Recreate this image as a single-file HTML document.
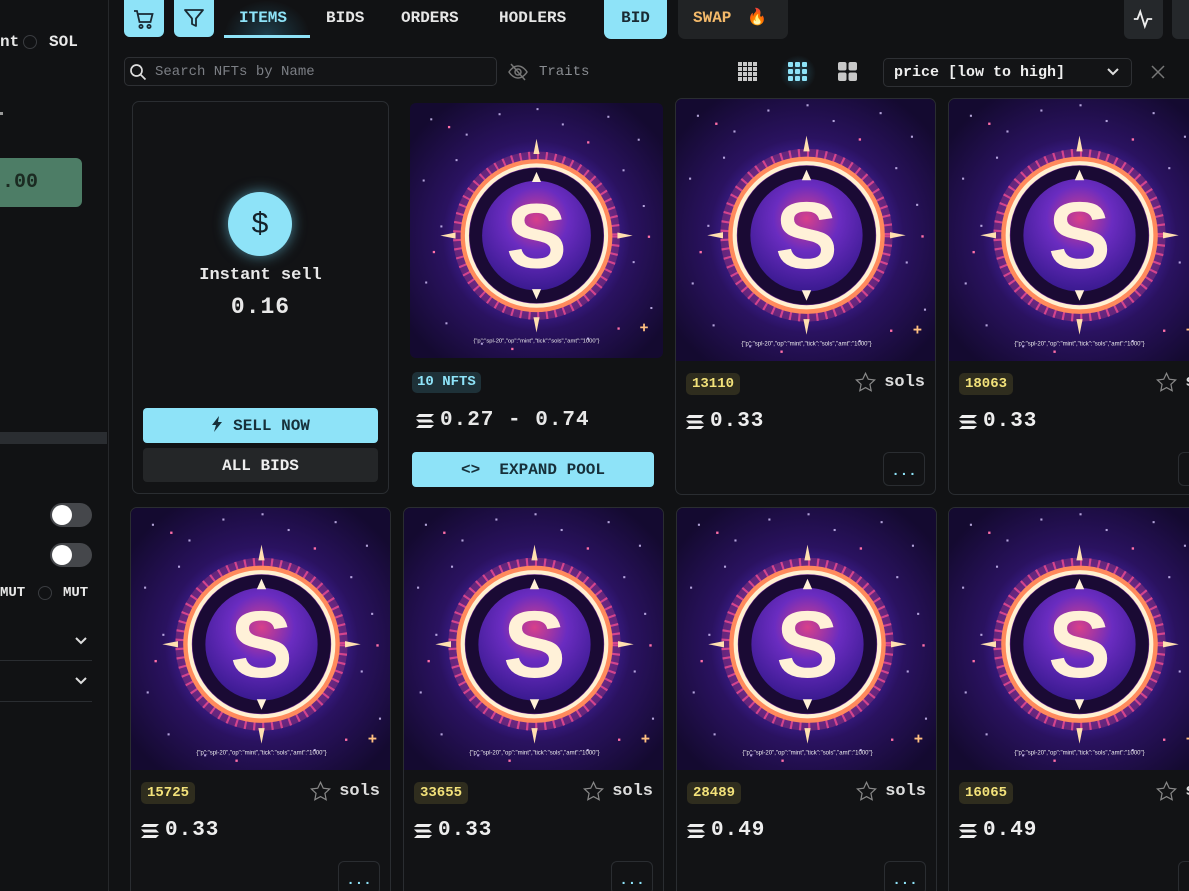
<!DOCTYPE html>
<html><head><meta charset="utf-8"><style>
*{box-sizing:border-box;margin:0;padding:0}
html,body{width:1189px;height:891px;overflow:hidden}
body{background:#111214;font-family:"Liberation Mono","DejaVu Sans Mono",monospace;color:#e8e8e8;position:relative}
.a{position:absolute}
.b{font-weight:bold}
.card{position:absolute;width:261px;height:397px;border:1px solid #2a2d31;border-radius:7px;background:#121315;overflow:hidden}
.card .art{position:absolute;left:0;top:0;width:261px;height:262px}
.badge{position:absolute;left:10px;top:274px;height:22px;line-height:22px;padding:0 6px;border-radius:5px;background:#2f2d1e;color:#f3e27a;font-weight:bold;font-size:14px}
.fav{position:absolute;right:10px;top:273px;font-size:17px;font-weight:bold;color:#ddd;display:flex;align-items:center;gap:8px}
.price{position:absolute;left:10px;top:311px;font-size:21px;font-weight:bold;color:#eee;display:flex;align-items:center;gap:6px;letter-spacing:1px}
.more{position:absolute;right:10px;top:353px;width:42px;height:34px;border:1px solid #2a2d31;border-radius:6px;color:#8ee3f8;text-align:center;line-height:38px;font-weight:bold;font-size:14px}
.nav{position:absolute;top:9px;font-size:16px;font-weight:bold;color:#e6e6e6}
</style></head><body>
<svg width="0" height="0" style="position:absolute"><defs>
<radialGradient id="bg" cx="50%" cy="52%" r="62%"><stop offset="0" stop-color="#5a2cc0"/><stop offset=".42" stop-color="#4422a0"/><stop offset=".6" stop-color="#2a1260"/><stop offset="1" stop-color="#140a30"/></radialGradient>
<radialGradient id="inn" cx="50%" cy="35%" r="65%"><stop offset="0" stop-color="#d8408a"/><stop offset=".45" stop-color="#6a2cc0"/><stop offset="1" stop-color="#3a1a90"/></radialGradient>
<g id="artg">
<rect width="100" height="100" fill="url(#bg)"/>
<g fill="#d8c8ff" opacity=".8"><rect x="8" y="6" width=".8" height=".8"/><rect x="22" y="12" width=".8" height=".8"/><rect x="35" y="4" width=".8" height=".8"/><rect x="60" y="8" width=".8" height=".8"/><rect x="78" y="5" width=".8" height=".8"/><rect x="90" y="14" width=".8" height=".8"/><rect x="5" y="30" width=".8" height=".8"/><rect x="12" y="48" width=".8" height=".8"/><rect x="6" y="70" width=".8" height=".8"/><rect x="14" y="86" width=".8" height=".8"/><rect x="92" y="40" width=".8" height=".8"/><rect x="88" y="62" width=".8" height=".8"/><rect x="95" y="80" width=".8" height=".8"/><rect x="70" y="92" width=".8" height=".8"/><rect x="28" y="94" width=".8" height=".8"/><rect x="50" y="2" width=".8" height=".8"/><rect x="18" y="22" width=".8" height=".8"/><rect x="84" y="26" width=".8" height=".8"/></g>
<g fill="#ff6fa8"><rect x="15" y="9" width=".9" height=".9"/><rect x="70" y="15" width=".9" height=".9"/><rect x="9" y="58" width=".9" height=".9"/><rect x="94" y="52" width=".9" height=".9"/><rect x="40" y="96" width=".9" height=".9"/><rect x="82" y="88" width=".9" height=".9"/></g>
<circle cx="50" cy="52" r="33" fill="#c0407a" opacity=".35"/>
<circle cx="50" cy="52" r="31" fill="none" stroke="#e0488f" stroke-width="4" stroke-dasharray="0.8 2.6" opacity=".9"/>
<circle cx="50" cy="52" r="29" fill="none" stroke="#ff8a5c" stroke-width="2"/>
<circle cx="50" cy="52" r="27.5" fill="none" stroke="#fff0d0" stroke-width="1.6"/>
<path d="M50 14l1.2 6h-2.4zM50 90l1.2-6h-2.4zM12 52l6-1.2v2.4zM88 52l-6-1.2v2.4z" fill="#ffe0b0"/>
<circle cx="50" cy="52" r="26.5" fill="#1a0a34"/>
<circle cx="50" cy="52" r="21.5" fill="url(#inn)"/>
<text x="50" y="64.5" text-anchor="middle" font-family="Liberation Sans,sans-serif" font-weight="bold" font-size="36" fill="#fff1d8">S</text>
<path d="M50 27l1.8 4h-3.6zM50 77l1.8-4h-3.6z" fill="#fff1d8"/>
<text x="50" y="94" text-anchor="middle" font-family="Liberation Sans,sans-serif" font-size="2.3" fill="#eee">{"p":"spl-20","op":"mint","tick":"sols","amt":"1000"}</text>
<path d="M91 88h3M92.5 86.5v3" stroke="#ffc080" stroke-width=".7"/>
</g></defs></svg>

<!-- sidebar -->
<div class="a" style="left:108px;top:0;width:1px;height:891px;background:#26282b"></div>
<div class="a b" style="left:0;top:33px;font-size:16px">nt</div>
<div class="a" style="left:23px;top:35px;width:14px;height:14px;border:1.5px solid #3a3c40;border-radius:50%"></div>
<div class="a b" style="left:49px;top:33px;font-size:16px">SOL</div>
<div class="a" style="left:0;top:112px;width:3px;height:3px;background:#999"></div>
<div class="a" style="left:0;top:158px;width:82px;height:49px;background:#4d7d66;border-radius:0 6px 6px 0;color:#1b2b22;font-size:20px;font-weight:bold;line-height:49px;padding-left:2px">.00</div>
<div class="a" style="left:0;top:432px;width:107px;height:12px;background:#2a2d31"></div>
<div class="a" style="left:50px;top:503px;width:42px;height:24px;border-radius:12px;background:#45474b"><div class="a" style="left:2px;top:2px;width:20px;height:20px;border-radius:50%;background:#fff"></div></div>
<div class="a" style="left:50px;top:543px;width:42px;height:24px;border-radius:12px;background:#45474b"><div class="a" style="left:2px;top:2px;width:20px;height:20px;border-radius:50%;background:#fff"></div></div>
<div class="a b" style="left:0;top:585px;font-size:14px">MUT</div>
<div class="a" style="left:38px;top:586px;width:14px;height:14px;border:1.5px solid #3a3c40;border-radius:50%"></div>
<div class="a b" style="left:63px;top:585px;font-size:14px">MUT</div>
<svg class="a" style="left:74px;top:633px" width="14" height="14" viewBox="0 0 14 14"><path d="M2 5l5 5 5-5" stroke="#ddd" stroke-width="2" fill="none"/></svg>
<div class="a" style="left:0;top:660px;width:92px;height:1px;background:#2a2d31"></div>
<svg class="a" style="left:74px;top:673px" width="14" height="14" viewBox="0 0 14 14"><path d="M2 5l5 5 5-5" stroke="#ddd" stroke-width="2" fill="none"/></svg>
<div class="a" style="left:0;top:701px;width:92px;height:1px;background:#2a2d31"></div>

<!-- top nav -->
<div class="a" style="left:124px;top:0;width:40px;height:37px;background:#8ee3f8;border-radius:0 0 6px 6px"></div>
<svg class="a" style="left:132px;top:7px" width="24" height="24" viewBox="0 0 24 24" fill="none" stroke="#1a2a33" stroke-width="1.8"><path d="M2 4h3l2.5 11h11l2-8H6.5"/><circle cx="9" cy="19.5" r="1.6"/><circle cx="17" cy="19.5" r="1.6"/></svg>
<div class="a" style="left:174px;top:0;width:40px;height:37px;background:#8ee3f8;border-radius:0 0 6px 6px"></div>
<svg class="a" style="left:182px;top:6px" width="24" height="24" viewBox="0 0 24 24" fill="none" stroke="#1a2a33" stroke-width="1.8" stroke-linejoin="round"><path d="M3 4h18l-7 8.5V20l-4-2v-5.5z"/></svg>
<div class="a" style="left:224px;top:0;width:86px;height:35px;background:radial-gradient(ellipse at 50% 100%,rgba(60,160,200,.3),transparent 70%)"></div>
<div class="nav" style="left:239px;color:#8ee3f8">ITEMS</div>
<div class="a" style="left:224px;top:35px;width:86px;height:3px;background:#8ee3f8"></div>
<div class="nav" style="left:326px">BIDS</div>
<div class="nav" style="left:401px">ORDERS</div>
<div class="nav" style="left:499px">HODLERS</div>
<div class="a b" style="left:604px;top:0;width:63px;height:39px;background:#8ee3f8;border-radius:0 0 7px 7px;color:#1a2a33;font-size:16px;text-align:center;line-height:37px">BID</div>
<div class="a b" style="left:678px;top:0;width:110px;height:39px;background:#212325;border-radius:0 0 7px 7px;color:#f3b96a;font-size:16px;line-height:37px;padding-left:15px">SWAP <span style="color:#f07030;margin-left:6px">🔥</span></div>
<div class="a" style="left:1124px;top:0;width:39px;height:39px;background:#25282b;border-radius:0 0 6px 6px"></div>
<svg class="a" style="left:1132px;top:8px" width="22" height="22" viewBox="0 0 24 24" fill="none" stroke="#eee" stroke-width="2"><path d="M2 12h4l3-8 5 16 3-8h5"/></svg>
<div class="a" style="left:1172px;top:0;width:20px;height:39px;background:#25282b;border-radius:0 0 0 6px"></div>

<!-- search row -->
<div class="a" style="left:124px;top:57px;width:373px;height:29px;border:1px solid #2e3034;border-radius:5px;background:#131416"></div>
<svg class="a" style="left:129px;top:63px" width="18" height="18" viewBox="0 0 18 18" fill="none" stroke="#ddd" stroke-width="1.7"><circle cx="7.5" cy="7.5" r="5.5"/><path d="M11.5 11.5l5 5"/></svg>
<div class="a" style="left:155px;top:64px;font-size:14px;color:#7c7f85">Search NFTs by Name</div>
<svg class="a" style="left:508px;top:63px" width="20" height="18" viewBox="0 0 20 18" fill="none" stroke="#777" stroke-width="1.5"><path d="M1 9s3.5-6 9-6 9 6 9 6-3.5 6-9 6-9-6-9-6z"/><circle cx="10" cy="9" r="3"/><path d="M3 1l14 16"/></svg>
<div class="a" style="left:539px;top:64px;font-size:14px;color:#8a8d92">Traits</div>
<svg class="a" style="left:738px;top:62px" width="19" height="19" viewBox="0 0 19 19" fill="#c8c8c8"><rect x="0" y="0" width="4" height="4"/><rect x="5" y="0" width="4" height="4"/><rect x="10" y="0" width="4" height="4"/><rect x="15" y="0" width="4" height="4"/><rect x="0" y="5" width="4" height="4"/><rect x="5" y="5" width="4" height="4"/><rect x="10" y="5" width="4" height="4"/><rect x="15" y="5" width="4" height="4"/><rect x="0" y="10" width="4" height="4"/><rect x="5" y="10" width="4" height="4"/><rect x="10" y="10" width="4" height="4"/><rect x="15" y="10" width="4" height="4"/><rect x="0" y="15" width="4" height="4"/><rect x="5" y="15" width="4" height="4"/><rect x="10" y="15" width="4" height="4"/><rect x="15" y="15" width="4" height="4"/></svg>
<div class="a" style="left:780px;top:55px;width:36px;height:36px;background:radial-gradient(circle,rgba(80,190,230,.3),transparent 70%)"></div>
<svg class="a" style="left:788px;top:62px" width="19" height="19" viewBox="0 0 19 19" fill="#8ee3f8"><rect x="0" y="0" width="5" height="5" rx="1"/><rect x="7" y="0" width="5" height="5" rx="1"/><rect x="14" y="0" width="5" height="5" rx="1"/><rect x="0" y="7" width="5" height="5" rx="1"/><rect x="7" y="7" width="5" height="5" rx="1"/><rect x="14" y="7" width="5" height="5" rx="1"/><rect x="0" y="14" width="5" height="5" rx="1"/><rect x="7" y="14" width="5" height="5" rx="1"/><rect x="14" y="14" width="5" height="5" rx="1"/></svg>
<svg class="a" style="left:838px;top:62px" width="19" height="19" viewBox="0 0 19 19" fill="#c8c8c8"><rect x="0" y="0" width="8.5" height="8.5" rx="2"/><rect x="10.5" y="0" width="8.5" height="8.5" rx="2"/><rect x="0" y="10.5" width="8.5" height="8.5" rx="2"/><rect x="10.5" y="10.5" width="8.5" height="8.5" rx="2"/></svg>
<div class="a" style="left:883px;top:58px;width:249px;height:29px;border:1px solid #2e3034;border-radius:5px;background:#131416"></div>
<div class="a b" style="left:894px;top:64px;font-size:15px;color:#eee">price [low to high]</div>
<svg class="a" style="left:1106px;top:66px" width="14" height="12" viewBox="0 0 14 12"><path d="M2 3l5 5 5-5" stroke="#ddd" stroke-width="2" fill="none"/></svg>
<svg class="a" style="left:1151px;top:65px" width="14" height="14" viewBox="0 0 14 14"><path d="M1 1l12 12M13 1L1 13" stroke="#777" stroke-width="1.5"/></svg>

<!-- instant sell card -->
<div class="a" style="left:132px;top:101px;width:257px;height:393px;border:1px solid #2a2d31;border-radius:7px;background:#121315"></div>
<div class="a" style="left:228px;top:192px;width:64px;height:64px;border-radius:50%;background:#8ee3f8;box-shadow:0 0 14px rgba(110,210,240,.6);color:#14222a;font-size:30px;text-align:center;line-height:64px;font-family:'Liberation Sans',sans-serif">$</div>
<div class="a b" style="left:132px;top:266px;width:257px;text-align:center;font-size:17px">Instant sell</div>
<div class="a b" style="left:132px;top:294px;width:257px;text-align:center;font-size:23px;letter-spacing:1px">0.16</div>
<div class="a b" style="left:143px;top:408px;width:235px;height:35px;background:#8ee3f8;border-radius:4px;color:#17303a;font-size:16px;text-align:center;line-height:36px"><svg width="12" height="16" viewBox="0 0 12 16" style="vertical-align:-2px;margin-right:10px"><path d="M8 0L1 9h4l-2 7 8-10H7z" fill="#17303a"/></svg>SELL NOW</div>
<div class="a b" style="left:143px;top:448px;width:235px;height:34px;background:#242628;border-radius:4px;color:#eee;font-size:16px;text-align:center;line-height:36px">ALL BIDS</div>

<!-- pool card -->
<div class="a" style="left:410px;top:103px;width:253px;height:255px;overflow:hidden;border-radius:6px"><svg width="253" height="255" viewBox="0 0 100 100" preserveAspectRatio="none"><use href="#artg"/></svg></div>
<div class="a b" style="left:412px;top:372px;height:21px;line-height:21px;padding:0 5px;border-radius:5px;background:#1e3138;color:#8ee3f8;font-size:14px">10 NFTS</div>
<div class="a b" style="left:416px;top:409px;font-size:21px;display:flex;align-items:center;gap:6px;letter-spacing:1px"><svg width="18" height="14" viewBox="0 0 18 14" fill="#eee"><path d="M3 0h15l-3 3H0zM0 5.5h15l3 3H3zM3 11h15l-3 3H0z"/></svg>0.27 - 0.74</div>
<div class="a b" style="left:412px;top:452px;width:242px;height:35px;background:#8ee3f8;border-radius:4px;color:#17303a;font-size:16px;text-align:center;line-height:36px">&lt;&gt;&nbsp; EXPAND POOL</div>

<!-- NFT cards -->
<div class="card" style="left:675px;top:98px"><svg class="art" viewBox="0 0 100 100" preserveAspectRatio="none"><use href="#artg"/></svg><div class="badge">13110</div><div class="fav"><svg width="21" height="20" viewBox="0 0 24 23"><path d="M12 1.5l3.2 6.8 7.3.9-5.4 5 1.4 7.3L12 17.9l-6.5 3.6 1.4-7.3-5.4-5 7.3-.9z" fill="none" stroke="#888" stroke-width="1.4"/></svg>sols</div><div class="price"><svg width="18" height="14" viewBox="0 0 18 14" fill="#eee"><path d="M3 0h15l-3 3H0zM0 5.5h15l3 3H3zM3 11h15l-3 3H0z"/></svg>0.33</div><div class="more">...</div></div>
<div class="card" style="left:948px;top:98px"><svg class="art" viewBox="0 0 100 100" preserveAspectRatio="none"><use href="#artg"/></svg><div class="badge">18063</div><div class="fav" style="right:-18px"><svg width="21" height="20" viewBox="0 0 24 23"><path d="M12 1.5l3.2 6.8 7.3.9-5.4 5 1.4 7.3L12 17.9l-6.5 3.6 1.4-7.3-5.4-5 7.3-.9z" fill="none" stroke="#888" stroke-width="1.4"/></svg>sols</div><div class="price"><svg width="18" height="14" viewBox="0 0 18 14" fill="#eee"><path d="M3 0h15l-3 3H0zM0 5.5h15l3 3H3zM3 11h15l-3 3H0z"/></svg>0.33</div><div class="more" style="right:-12px">...</div></div>

<div class="card" style="left:130px;top:507px"><svg class="art" viewBox="0 0 100 100" preserveAspectRatio="none"><use href="#artg"/></svg><div class="badge">15725</div><div class="fav"><svg width="21" height="20" viewBox="0 0 24 23"><path d="M12 1.5l3.2 6.8 7.3.9-5.4 5 1.4 7.3L12 17.9l-6.5 3.6 1.4-7.3-5.4-5 7.3-.9z" fill="none" stroke="#888" stroke-width="1.4"/></svg>sols</div><div class="price"><svg width="18" height="14" viewBox="0 0 18 14" fill="#eee"><path d="M3 0h15l-3 3H0zM0 5.5h15l3 3H3zM3 11h15l-3 3H0z"/></svg>0.33</div><div class="more">...</div></div>
<div class="card" style="left:403px;top:507px"><svg class="art" viewBox="0 0 100 100" preserveAspectRatio="none"><use href="#artg"/></svg><div class="badge">33655</div><div class="fav"><svg width="21" height="20" viewBox="0 0 24 23"><path d="M12 1.5l3.2 6.8 7.3.9-5.4 5 1.4 7.3L12 17.9l-6.5 3.6 1.4-7.3-5.4-5 7.3-.9z" fill="none" stroke="#888" stroke-width="1.4"/></svg>sols</div><div class="price"><svg width="18" height="14" viewBox="0 0 18 14" fill="#eee"><path d="M3 0h15l-3 3H0zM0 5.5h15l3 3H3zM3 11h15l-3 3H0z"/></svg>0.33</div><div class="more">...</div></div>
<div class="card" style="left:676px;top:507px"><svg class="art" viewBox="0 0 100 100" preserveAspectRatio="none"><use href="#artg"/></svg><div class="badge">28489</div><div class="fav"><svg width="21" height="20" viewBox="0 0 24 23"><path d="M12 1.5l3.2 6.8 7.3.9-5.4 5 1.4 7.3L12 17.9l-6.5 3.6 1.4-7.3-5.4-5 7.3-.9z" fill="none" stroke="#888" stroke-width="1.4"/></svg>sols</div><div class="price"><svg width="18" height="14" viewBox="0 0 18 14" fill="#eee"><path d="M3 0h15l-3 3H0zM0 5.5h15l3 3H3zM3 11h15l-3 3H0z"/></svg>0.49</div><div class="more">...</div></div>
<div class="card" style="left:948px;top:507px"><svg class="art" viewBox="0 0 100 100" preserveAspectRatio="none"><use href="#artg"/></svg><div class="badge">16065</div><div class="fav" style="right:-18px"><svg width="21" height="20" viewBox="0 0 24 23"><path d="M12 1.5l3.2 6.8 7.3.9-5.4 5 1.4 7.3L12 17.9l-6.5 3.6 1.4-7.3-5.4-5 7.3-.9z" fill="none" stroke="#888" stroke-width="1.4"/></svg>sols</div><div class="price"><svg width="18" height="14" viewBox="0 0 18 14" fill="#eee"><path d="M3 0h15l-3 3H0zM0 5.5h15l3 3H3zM3 11h15l-3 3H0z"/></svg>0.49</div><div class="more" style="right:-12px">...</div></div>
</body></html>
